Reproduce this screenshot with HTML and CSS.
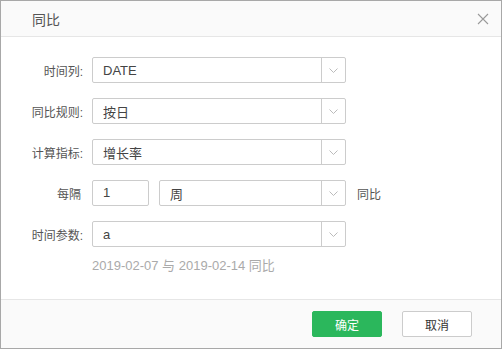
FILE: index.html
```html
<!DOCTYPE html>
<html lang="zh-CN">
<head>
    <meta charset="UTF-8">
    <title>同比</title>
    <link rel="stylesheet" href="styles.css">
</head>
<body>
    <div class="dialog">
        <div class="dialog-header">
            <span class="dialog-title">同比</span>
            <svg class="close-icon" width="12" height="12" viewBox="0 0 12 12">
                <path d="M1 1L11 11M11 1L1 11" stroke="#9a9a9a" stroke-width="1.1" fill="none"/>
            </svg>
        </div>

        <div class="dialog-body">
            <div class="form-row">
                <label class="form-label">时间列:</label>
                <div class="select">
                    <span class="select-value">DATE</span>
                    <span class="select-arrow"><svg width="9" height="5" viewBox="0 0 9 5"><path d="M0.5 0.5L4.5 4.5L8.5 0.5" stroke="#bbb" fill="none"/></svg></span>
                </div>
            </div>

            <div class="form-row">
                <label class="form-label">同比规则:</label>
                <div class="select">
                    <span class="select-value">按日</span>
                    <span class="select-arrow"><svg width="9" height="5" viewBox="0 0 9 5"><path d="M0.5 0.5L4.5 4.5L8.5 0.5" stroke="#bbb" fill="none"/></svg></span>
                </div>
            </div>

            <div class="form-row">
                <label class="form-label">计算指标:</label>
                <div class="select">
                    <span class="select-value">增长率</span>
                    <span class="select-arrow"><svg width="9" height="5" viewBox="0 0 9 5"><path d="M0.5 0.5L4.5 4.5L8.5 0.5" stroke="#bbb" fill="none"/></svg></span>
                </div>
            </div>

            <div class="form-row">
                <label class="form-label label-plain">每隔</label>
                <div class="text-input">1</div>
                <div class="select select-short">
                    <span class="select-value">周</span>
                    <span class="select-arrow"><svg width="9" height="5" viewBox="0 0 9 5"><path d="M0.5 0.5L4.5 4.5L8.5 0.5" stroke="#bbb" fill="none"/></svg></span>
                </div>
                <span class="suffix">同比</span>
            </div>

            <div class="form-row">
                <label class="form-label">时间参数:</label>
                <div class="select">
                    <span class="select-value">a</span>
                    <span class="select-arrow"><svg width="9" height="5" viewBox="0 0 9 5"><path d="M0.5 0.5L4.5 4.5L8.5 0.5" stroke="#bbb" fill="none"/></svg></span>
                </div>
            </div>

            <div class="hint">2019-02-07 与 2019-02-14 同比</div>
        </div>

        <div class="dialog-footer">
            <button class="btn btn-primary">确定</button>
            <button class="btn btn-default">取消</button>
        </div>
    </div>
</body>
</html>
```

FILE: styles.css
```css
html, body {
    margin: 0;
    padding: 0;
}
body {
    font-family: "Liberation Sans", "Noto Sans CJK SC", Arial, sans-serif;
    font-size: 12px;
    color: #333;
}
.dialog {
    width: 502px;
    height: 349px;
    box-sizing: border-box;
    border: 1px solid #a8a8a8;
    background-color: #fff;
    display: flex;
    flex-direction: column;
}
.dialog-header {
    height: 35px;
    flex: none;
    display: flex;
    align-items: center;
    justify-content: space-between;
    padding: 0 12px 0 31px;
    background-color: #fafafa;
    border-bottom: 1px solid #e6e6e6;
}
.dialog-title {
    font-size: 14px;
    color: #555;
    padding-top: 1px;
}
.close-icon {
    margin-top: 1px;
}
.dialog-body {
    flex: 1;
    padding-top: 20px;
}
.form-row {
    display: flex;
    align-items: center;
    height: 26px;
    margin-bottom: 15px;
}
.form-label {
    width: 82px;
    margin-right: 9px;
    text-align: right;
    color: #555;
    flex: none;
}
.label-plain {
    width: 80px;
    margin-right: 11px;
}
.select {
    width: 254px;
    height: 26px;
    box-sizing: border-box;
    border: 1px solid #ccc;
    border-radius: 2px;
    display: flex;
    align-items: center;
}
.select-short {
    width: 187px;
    margin-left: 10px;
}
.select-value {
    flex: 1;
    padding-left: 10px;
    font-size: 13px;
    color: #444;
}
.select-arrow {
    width: 23px;
    height: 24px;
    border-left: 1px solid #ccc;
    display: flex;
    align-items: center;
    justify-content: center;
}
.text-input {
    width: 57px;
    height: 26px;
    box-sizing: border-box;
    border: 1px solid #ccc;
    border-radius: 2px;
    padding-left: 10px;
    line-height: 24px;
    font-size: 13px;
    color: #444;
}
.suffix {
    margin-left: 11px;
    color: #555;
}
.hint {
    margin-top: -5px;
    padding-left: 91px;
    color: #aaa;
    font-size: 13px;
    line-height: 18px;
}
.dialog-footer {
    height: 49px;
    flex: none;
    box-sizing: border-box;
    background-color: #fafafa;
    border-top: 1px solid #e6e6e6;
    display: flex;
    justify-content: flex-end;
    align-items: flex-start;
    padding: 11px 29px 0 0;
    gap: 20px;
}
.btn {
    width: 70px;
    height: 26px;
    border-radius: 2px;
    font-family: inherit;
    font-size: 12px;
    cursor: pointer;
}
.btn-primary {
    background-color: #2bb75c;
    border: 1px solid #2bb75c;
    color: #fff;
}
.btn-default {
    background-color: #fff;
    border: 1px solid #ccc;
    color: #333;
}
```
